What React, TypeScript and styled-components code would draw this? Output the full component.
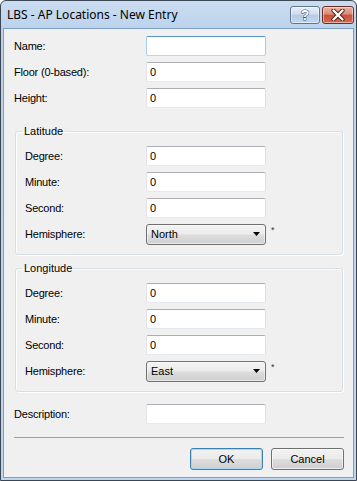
import React from "react";
import styled, { createGlobalStyle } from "styled-components";

const Global = createGlobalStyle`
  html, body { margin: 0; padding: 0; background: #ffffff; }
  body { width: 357px; height: 481px; overflow: hidden; font-family: "Liberation Sans", Arial, sans-serif; }
  * { box-sizing: border-box; }
`;

const Window = styled.div`
  width: 357px;
  height: 481px;
  border: 1px solid #3a4654;
  border-radius: 6px 6px 0 0;
  background: linear-gradient(#cadcf0, #bcd3ec 28px, #bdd5ee);
  display: flex;
  flex-direction: column;
  overflow: hidden;
`;

const TitleBar = styled.div`
  height: 27px;
  flex-shrink: 0;
  display: flex;
  align-items: flex-start;
  padding: 5px 2px 0 6px;
`;

const TitleText = styled.div`
  flex: 1;
  font-family: "Noto Sans", "Open Sans", sans-serif;
  font-size: 12px;
  line-height: 16px;
  color: #000;
  padding-top: 1px;
`;

const CaptionButtons = styled.div`
  display: flex;
  gap: 2px;
`;

const CaptionButton = styled.div<{ $kind: "help" | "close" }>`
  width: ${(p) => (p.$kind === "help" ? 30 : 32)}px;
  height: 18px;
  border-radius: 3px;
  border: 1px solid ${(p) => (p.$kind === "help" ? "#61778f" : "#6d3024")};
  background: ${(p) =>
    p.$kind === "help"
      ? "linear-gradient(#e6eff9 0%, #cfdeef 45%, #b4cbe5 50%, #c3d7ee 100%)"
      : "linear-gradient(#eab2a5 0%, #dc8a76 45%, #c9503a 50%, #d66b52 100%)"};
  box-shadow: inset 0 0 0 1px rgba(255, 255, 255, 0.45);
  display: flex;
  align-items: center;
  justify-content: center;
`;

const Client = styled.div`
  flex: 1;
  margin: 0 2px 2px 2px;
  background: #f0f0f0;
  border: 1px solid #7d9fc4;
  display: flex;
  flex-direction: column;
  padding: 4px 9px 0 10px;
  font-size: 11px;
  color: #000;
`;

const Row = styled.div`
  display: flex;
  align-items: center;
  height: 26px;
`;

const Label = styled.label<{ $w: number }>`
  width: ${(p) => p.$w}px;
  flex-shrink: 0;
  font-size: 11px;
  letter-spacing: -0.2px;
`;

const TextBox = styled.div<{ $focused?: boolean }>`
  width: 120px;
  height: 20px;
  background: #fff;
  border: 1px solid;
  border-color: ${(p) =>
    p.$focused ? "#5794cc #a8cbe9 #b7d6f0 #a8cbe9" : "#abadb3 #dbdfe6 #e3e9ef #e2e3ea"};
  border-radius: 2px;
  padding-left: 3px;
  display: flex;
  align-items: center;
  font-size: 11px;
`;

const Combo = styled.div`
  width: 120px;
  height: 21px;
  border: 1px solid #707070;
  border-radius: 3px;
  background: linear-gradient(#f3f3f3 0%, #ebebeb 48%, #dddddd 52%, #cfcfcf 100%);
  box-shadow: inset 0 0 0 1px rgba(255, 255, 255, 0.55);
  display: flex;
  align-items: center;
  justify-content: space-between;
  padding: 0 5px 0 4px;
  font-size: 11px;
`;

const Required = styled.span`
  align-self: flex-start;
  margin: 4px 0 0 5px;
  font-size: 9px;
  color: #333;
`;

const Group = styled.fieldset<{ $top: number }>`
  margin: ${(p) => p.$top}px 1px 0 1px;
  padding: 5px 0 7px 9px;
  border: 1px solid #d5dfe5;
  border-radius: 3px;
  min-width: 0;
  box-shadow: inset 1px 1px 0 #fff, 1px 1px 0 #fff;
`;

const Legend = styled.legend`
  margin-left: -3px;
  padding: 0 2px;
  font-size: 11px;
  line-height: 13px;
`;

const Separator = styled.div`
  margin-top: 10px;
  height: 1px;
  background: #a0a0a0;
`;

const ButtonRow = styled.div`
  margin-top: 10px;
  display: flex;
  justify-content: flex-end;
  gap: 8px;
`;

const PushButton = styled.div<{ $default?: boolean }>`
  width: 73px;
  height: 22px;
  border: 1px solid ${(p) => (p.$default ? "#3c7fb1" : "#707070")};
  border-radius: 3px;
  background: linear-gradient(#f2f2f2 0%, #ebebeb 48%, #dddddd 52%, #cfcfcf 100%);
  box-shadow: inset 0 0 0 1px ${(p) => (p.$default ? "#a7d9f5" : "rgba(255,255,255,0.6)")};
  display: flex;
  align-items: center;
  justify-content: center;
  font-size: 11px;
`;

const Arrow = () => (
  <svg width="7" height="4" viewBox="0 0 7 4">
    <path d="M0 0 H7 L3.5 4 Z" fill="#000" />
  </svg>
);

const HelpGlyph = () => (
  <svg width="14" height="14" viewBox="0 0 14 14">
    <text
      x="7"
      y="12"
      textAnchor="middle"
      fontFamily="Liberation Sans, Arial, sans-serif"
      fontSize="14"
      fontWeight="bold"
      fill="#fff"
      stroke="#3b4b5f"
      strokeWidth="1"
      paintOrder="stroke"
    >
      ?
    </text>
  </svg>
);

const CloseGlyph = () => (
  <svg width="14" height="12" viewBox="0 0 14 12">
    <path d="M2.5 1.5 L11.5 10.5 M11.5 1.5 L2.5 10.5" stroke="#4a1d15" strokeWidth="4.2" strokeLinecap="round" />
    <path d="M2.5 1.5 L11.5 10.5 M11.5 1.5 L2.5 10.5" stroke="#fff" strokeWidth="2.4" strokeLinecap="round" />
  </svg>
);

type Field = { label: string; value: string };

const FieldRow = ({ label, value, w, focused }: { label: string; value: string; w: number; focused?: boolean }) => (
  <Row>
    <Label $w={w}>{label}</Label>
    <TextBox $focused={focused}>{value}</TextBox>
  </Row>
);

const ComboRow = ({ label, value, w }: { label: string; value: string; w: number }) => (
  <Row>
    <Label $w={w}>{label}</Label>
    <Combo>
      <span>{value}</span>
      <Arrow />
    </Combo>
    <Required>*</Required>
  </Row>
);

const coords: Field[] = [
  { label: "Degree:", value: "0" },
  { label: "Minute:", value: "0" },
  { label: "Second:", value: "0" },
];

const CoordGroup = ({ title, hemisphere, top }: { title: string; hemisphere: string; top: number }) => (
  <Group $top={top}>
    <Legend>{title}</Legend>
    {coords.map((f) => (
      <FieldRow key={f.label} label={f.label} value={f.value} w={121} />
    ))}
    <ComboRow label="Hemisphere:" value={hemisphere} w={121} />
  </Group>
);

export default function App() {
  return (
    <>
      <Global />
      <Window>
        <TitleBar>
          <TitleText>LBS - AP Locations - New Entry</TitleText>
          <CaptionButtons>
            <CaptionButton $kind="help">
              <HelpGlyph />
            </CaptionButton>
            <CaptionButton $kind="close">
              <CloseGlyph />
            </CaptionButton>
          </CaptionButtons>
        </TitleBar>
        <Client>
          <FieldRow label="Name:" value="" w={132} focused />
          <FieldRow label="Floor (0-based):" value="0" w={132} />
          <FieldRow label="Height:" value="0" w={132} />
          <CoordGroup title="Latitude" hemisphere="North" top={14} />
          <CoordGroup title="Longitude" hemisphere="East" top={7} />
          <Row style={{ marginTop: 9 }}>
            <Label $w={132}>Description:</Label>
            <TextBox />
          </Row>
          <Separator />
          <ButtonRow>
            <PushButton $default>OK</PushButton>
            <PushButton>Cancel</PushButton>
          </ButtonRow>
        </Client>
      </Window>
    </>
  );
}
